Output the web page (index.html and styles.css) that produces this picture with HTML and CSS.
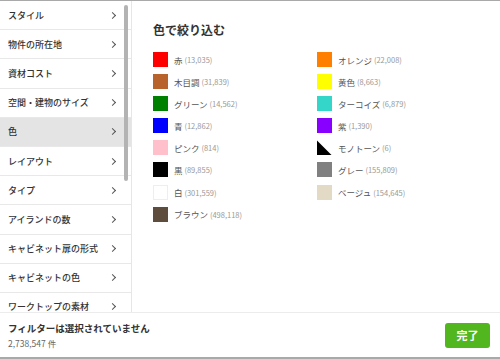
FILE: index.html
```html
<!DOCTYPE html>
<html lang="ja">
<head>
  <meta charset="UTF-8">
  <title>フィルター</title>
  <link rel="stylesheet" href="styles.css">
</head>
<body>

  <div class="app">
    <div class="main">
      <ul class="menu">
        <li>スタイル<span class="chev"></span></li>
        <li>物件の所在地<span class="chev"></span></li>
        <li>資材コスト<span class="chev"></span></li>
        <li>空間・建物のサイズ<span class="chev"></span></li>
        <li class="active">色<span class="chev"></span></li>
        <li>レイアウト<span class="chev"></span></li>
        <li>タイプ<span class="chev"></span></li>
        <li>アイランドの数<span class="chev"></span></li>
        <li>キャビネット扉の形式<span class="chev"></span></li>
        <li>キャビネットの色<span class="chev"></span></li>
        <li>ワークトップの素材<span class="chev"></span></li>
      </ul>
      <div class="scrollbar"></div>

      <div class="panel">
        <h2>色で絞り込む</h2>
        <ul class="colors">
          <li><span class="swatch red"></span>赤 <small>(13,035)</small></li>
          <li><span class="swatch wood"></span>木目調 <small>(31,839)</small></li>
          <li><span class="swatch green"></span>グリーン <small>(14,562)</small></li>
          <li><span class="swatch blue"></span>青 <small>(12,862)</small></li>
          <li><span class="swatch pink"></span>ピンク <small>(814)</small></li>
          <li><span class="swatch black"></span>黒 <small>(89,855)</small></li>
          <li><span class="swatch white"></span>白 <small>(301,559)</small></li>
          <li><span class="swatch brown"></span>ブラウン <small>(498,118)</small></li>
          <li><span class="swatch orange"></span>オレンジ <small>(22,008)</small></li>
          <li><span class="swatch yellow"></span>黄色 <small>(8,663)</small></li>
          <li><span class="swatch turquoise"></span>ターコイズ <small>(6,879)</small></li>
          <li><span class="swatch purple"></span>紫 <small>(1,390)</small></li>
          <li><span class="swatch mono"></span>モノトーン <small>(6)</small></li>
          <li><span class="swatch gray"></span>グレー <small>(155,809)</small></li>
          <li><span class="swatch beige"></span>ベージュ <small>(154,645)</small></li>
        </ul>
      </div>
    </div>

    <div class="footer">
      <div class="status">
        <p class="status-title">フィルターは選択されていません</p>
        <p class="status-count">2,738,547 件</p>
      </div>
      <button class="done">完了</button>
    </div>
  </div>

</body>
</html>
```

FILE: styles.css
```css
body {
  margin: 0;
  font-family: "Noto Sans CJK JP", "Noto Sans", sans-serif;
  color: #333;
  background: white;
}

.app {
  height: 359px;
  box-sizing: border-box;
  border-top: 1px solid #a9a9a9;
  border-bottom: 2px solid #a9a9a9;
  display: flex;
  flex-direction: column;
}

.main {
  flex: 1;
  display: flex;
  overflow: hidden;
  position: relative;
}

.menu {
  list-style: none;
  margin: 0;
  padding: 0;
  width: 131px;
  flex-shrink: 0;
  border-right: 1px solid #e6e6e6;
}

.menu li {
  height: 28.2px;
  border-bottom: 1px solid #e8e8e8;
  padding: 0 16px 0 8px;
  display: flex;
  align-items: center;
  justify-content: space-between;
  font-size: 9px;
  font-weight: 500;
  white-space: nowrap;
}

.menu li.active {
  background: #e4e4e4;
}

.chev {
  width: 4px;
  height: 4px;
  border-top: 1px solid #555;
  border-right: 1px solid #555;
  transform: rotate(45deg);
}

.scrollbar {
  position: absolute;
  left: 124px;
  top: 4px;
  width: 4px;
  height: 176px;
  border-radius: 2px;
  background: #b3b3b3;
}

.panel {
  flex: 1;
  padding: 20px 0 0 21px;
}

.panel h2 {
  margin: 0 0 14px;
  font-size: 12px;
  font-weight: bold;
  color: #333;
  line-height: 17px;
}

.colors {
  list-style: none;
  margin: 0;
  padding: 0;
  display: grid;
  grid-template-rows: repeat(8, 15px);
  grid-template-columns: 164px 164px;
  grid-auto-flow: column;
  row-gap: 7.1px;
}

.colors li {
  display: flex;
  align-items: center;
  font-size: 8.5px;
  color: #555;
  white-space: pre;
}

.colors small {
  font-size: 7.5px;
  color: #999;
}

.swatch {
  width: 15px;
  height: 15px;
  margin-right: 6px;
  box-sizing: border-box;
}

.red { background: #ff0000; }
.wood { background: #b8632b; }
.green { background: #008000; }
.blue { background: #0000ff; }
.pink { background: #ffc0cb; }
.black { background: #000; }
.white { background: #fff; border: 1px solid #eee; }
.brown { background: #5e4c3c; }
.orange { background: #ff7f00; }
.yellow { background: #ffff00; }
.turquoise { background: #33d6c8; }
.purple { background: #8800ff; }
.mono { background: #000; clip-path: polygon(0 0, 0 100%, 100% 100%); }
.gray { background: #808080; }
.beige { background: #e3dac6; }

.footer {
  height: 44px;
  flex-shrink: 0;
  border-top: 1px solid #ececec;
  display: flex;
  align-items: center;
  justify-content: space-between;
  padding: 0 10px 0 8px;
}

.status p {
  margin: 0;
}

.status-title {
  font-size: 9.5px;
  font-weight: bold;
  line-height: 15px;
}

.status-count {
  font-size: 8.5px;
  color: #666;
  line-height: 14px;
}

.done {
  width: 45px;
  height: 25px;
  background: #52b61e;
  color: white;
  border: none;
  border-radius: 3px;
  font-family: inherit;
  font-size: 11px;
  font-weight: bold;
  padding: 0;
}
```
